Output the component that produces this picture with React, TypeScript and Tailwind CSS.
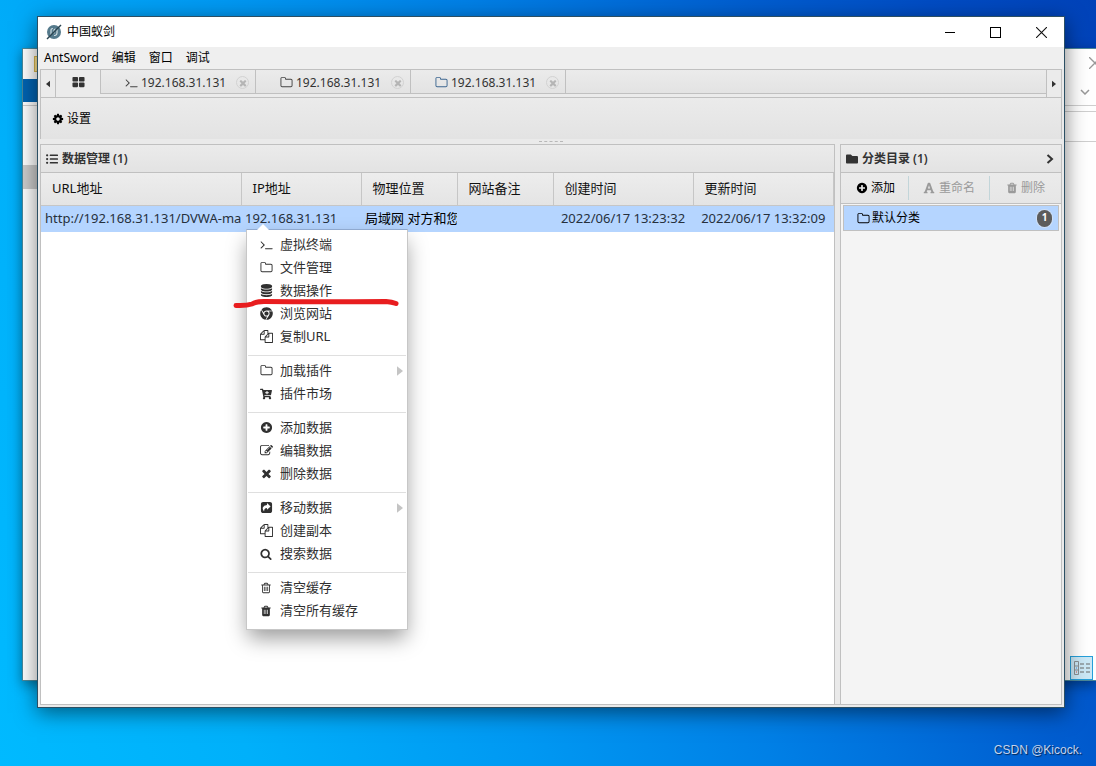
import { FC, ReactNode } from "react";
import clsx from "clsx";
import { FaCartPlus, FaChrome, FaFolder, FaFont, FaListUl } from "react-icons/fa";

const paths = {
  terminal:
    "M649 983l-466 466q-10 10-23 10t-23-10l-50-50q-10-10-10-23t10-23l393-393-393-393q-10-10-10-23t10-23l50-50q10-10 23-10t23 10l466 466q10 10 10 23t-10 23zm1079 457v64q0 14-9 23t-23 9h-960q-14 0-23-9t-9-23v-64q0-14 9-23t23-9h960q14 0 23 9t9 23z",
  folder:
    "M1600 1312v-704q0-40-28-68t-68-28h-704q-40 0-68-28t-28-68v-64q0-40-28-68t-68-28h-320q-40 0-68 28t-28 68v960q0 40 28 68t68 28h1216q40 0 68-28t28-68zm128-704v704q0 92-66 158t-158 66h-1216q-92 0-158-66t-66-158v-960q0-92 66-158t158-66h320q92 0 158 66t66 158v32h672q92 0 158 66t66 158z",
  files:
    "M1696 384q40 0 68 28t28 68v1216q0 40-28 68t-68 28h-960q-40 0-68-28t-28-68v-288h-544q-40 0-68-28t-28-68v-672q0-40 20-88t48-76l408-408q28-28 76-48t88-20h416q40 0 68 28t28 68v328q68-40 128-40h416zm-544 213l-299 299h299v-299zm-640-384l-299 299h299v-299zm196 647l316-316v-416h-384v416q0 40-28 68t-68 28h-416v640h512v-256q0-40 20-88t48-76zm956 804v-1152h-384v416q0 40-28 68t-68 28h-416v640h896z",
  cog: "M1152 896q0-106-75-181t-181-75-181 75-75 181 75 181 181 75 181-75 75-181zm512-109v222q0 12-8 23t-20 13l-185 28q-19 54-39 91 35 50 107 138 10 12 10 25t-9 23q-27 37-99 108t-94 71q-12 0-26-9l-138-108q-44 23-91 38-16 136-29 186-7 28-36 28h-222q-14 0-24.500-8.500t-11.500-21.500l-28-184q-49-16-90-37l-141 107q-10 9-25 9-14 0-25-11-126-114-165-168-7-10-7-23 0-12 8-23 15-21 51-66.500t54-70.500q-27-50-41-99l-183-27q-13-2-21-12.500t-8-23.500v-222q0-12 8-23t19-13l186-28q14-46 39-92-40-57-107-138-10-12-10-24 0-10 9-23 26-36 98.500-107.500t94.500-71.500q13 0 26 10l138 107q44-23 91-38 16-136 29-186 7-28 36-28h222q14 0 24.500 8.500t11.500 21.500l28 184q49 16 90 37l142-107q9-9 24-9 13 0 25 10 129 119 165 170 7 8 7 22 0 12-8 23-15 21-51 66.500t-54 70.500q26 50 41 98l183 28q13 2 21 12.500t8 23.500z",
  plus: "M1344 960v-128q0-26-19-45t-45-19h-256v-256q0-26-19-45t-45-19h-128q-26 0-45 19t-19 45v256h-256q-26 0-45 19t-19 45v128q0 26 19 45t45 19h256v256q0 26 19 45t45 19h128q26 0 45-19t19-45v-256h256q26 0 45-19t19-45zm320-64q0 209-103 385.500t-279.500 279.500-385.500 103-385.500-103-279.500-279.500-103-385.500 103-385.500 279.500-279.500 385.500-103 385.500 103 279.500 279.500 103 385.500z",
  edit: "M888 1184l116-116-152-152-116 116v56h96v96h56zm440-720q-16-16-33 1l-350 350q-17 17-1 33t33-1l350-350q17-17 1-33zm80 594v190q0 119-84.500 203.500t-203.500 84.500h-832q-119 0-203.500-84.500t-84.500-203.500v-832q0-119 84.500-203.500t203.500-84.500h832q63 0 117 25 15 7 18 23 3 17-9 29l-49 49q-14 14-32 8-23-6-45-6h-832q-66 0-113 47t-47 113v832q0 66 47 113t113 47h832q66 0 113-47t47-113v-126q0-13 9-22l64-64q15-15 35-7t20 29zm-96-738l288 288-672 672h-288v-288zm444 132l-92 92-288-288 92-92q28-28 68-28t68 28l152 152q28 28 28 68t-28 68z",
  times:
    "M1490 1322q0 40-28 68l-136 136q-28 28-68 28t-68-28l-294-294-294 294q-28 28-68 28t-68-28l-136-136q-28-28-28-68t28-68l294-294-294-294q-28-28-28-68t28-68l136-136q28-28 68-28t68 28l294 294 294-294q28-28 68-28t68 28l136 136q28 28 28 68t-28 68l-294 294 294 294q28 28 28 68z",
  search:
    "M1216 832q0-185-131.500-316.500t-316.500-131.500-316.500 131.500-131.500 316.500 131.500 316.500 316.500 131.500 316.500-131.500 131.500-316.500zm512 832q0 52-38 90t-90 38q-54 0-90-38l-343-342q-179 124-399 124-143 0-273.500-55.500t-225-150-150-225-55.500-273.500 55.500-273.500 150-225 225-150 273.500-55.500 273.500 55.500 225 150 150 225 55.500 273.500q0 220-124 399l343 343q37 37 37 90z",
  trashOpen:
    "M704 736v576q0 14-9 23t-23 9h-64q-14 0-23-9t-9-23v-576q0-14 9-23t23-9h64q14 0 23 9t9 23zm256 0v576q0 14-9 23t-23 9h-64q-14 0-23-9t-9-23v-576q0-14 9-23t23-9h64q14 0 23 9t9 23zm256 0v576q0 14-9 23t-23 9h-64q-14 0-23-9t-9-23v-576q0-14 9-23t23-9h64q14 0 23 9t9 23zm128 724v-948h-896v948q0 22 7 40.500t14.500 27 10.500 8.500h832q3 0 10.500-8.500t14.500-27 7-40.500zm-672-1076h448l-48-117q-7-9-17-11h-317q-10 2-17 11zm928 32v64q0 14-9 23t-23 9h-96v948q0 83-47 143.500t-113 60.500h-832q-66 0-113-58.500t-47-141.500v-952h-96q-14 0-23-9t-9-23v-64q0-14 9-23t23-9h309l70-167q15-37 54-63t79-26h320q40 0 79 26t54 63l70 167h309q14 0 23 9t9 23z",
  trash:
    "M576 704v640h96v-640zm256 0v640h96v-640zm256 0v640h96v-640zM672 384h448l-48-117q-7-9-17-11h-317q-10 2-17 11zm928 32v64q0 14-9 23t-23 9h-96v948q0 83-47 143.500t-113 60.500h-832q-66 0-113-58.500t-47-141.500v-952h-96q-14 0-23-9t-9-23v-64q0-14 9-23t23-9h309l70-167q15-37 54-63t79-26h320q40 0 79 26t54 63l70 167h309q14 0 23 9t9 23z",
  database:
    "M896 768q237 0 443-43t325-127v170q0 69-103 128t-280 93.500-385 34.500-385-34.500-280-93.500-103-128v-170q119 84 325 127t443 43zm0 768q237 0 443-43t325-127v170q0 69-103 128t-280 93.500-385 34.500-385-34.500-280-93.500-103-128v-170q119 84 325 127t443 43zm0-384q237 0 443-43t325-127v170q0 69-103 128t-280 93.500-385 34.500-385-34.500-280-93.500-103-128v-170q119 84 325 127t443 43zm0-1152q208 0 385 34.500t280 93.500 103 128v128q0 69-103 128t-280 93.500-385 34.500-385-34.500-280-93.500-103-128v-128q0-69 103-128t280-93.500 385-34.500z",
  share:
    "M1664 416v960q0 119-84.500 203.500t-203.500 84.500h-960q-119 0-203.500-84.500t-84.500-203.500v-960q0-119 84.500-203.500t203.500-84.500h960q119 0 203.500 84.500t84.500 203.500zM960 290v250Q500 560 390 880Q320 1180 560 1440Q540 960 960 950V1210L1460 750z",
  large:
    "M832 1024v384q0 52-38 90t-90 38h-512q-52 0-90-38t-38-90v-384q0-52 38-90t90-38h512q52 0 90 38t38 90zm0-768v384q0 52-38 90t-90 38h-512q-52 0-90-38t-38-90v-384q0-52 38-90t90-38h512q52 0 90 38t38 90zm896 768v384q0 52-38 90t-90 38h-512q-52 0-90-38t-38-90v-384q0-52 38-90t90-38h512q52 0 90 38t38 90zm0-768v384q0 52-38 90t-90 38h-512q-52 0-90-38t-38-90v-384q0-52 38-90t90-38h512q52 0 90 38t38 90z",
};

type IconName = keyof typeof paths;

const Icon: FC<{ name: IconName; className?: string }> = ({ name, className }) => (
  <svg viewBox="0 0 1792 1792" fill="currentColor" fillRule="evenodd" className={clsx("shrink-0", className || "size-[13px]")}>
    <path d={paths[name]} />
  </svg>
);

const Arrow: FC<{ left?: boolean; className?: string }> = ({ left, className }) => (
  <svg viewBox="0 0 5 8" fill="currentColor" className={className}>
    <path d={left ? "M5 0v8L0 4z" : "M0 0v8l5-4z"} />
  </svg>
);

type MenuEntry = { icon: ReactNode; label: string; sub?: boolean };

const menuGroups: MenuEntry[][] = [
  [
    { icon: <Icon name="terminal" />, label: "虚拟终端" },
    { icon: <Icon name="folder" />, label: "文件管理" },
    { icon: <Icon name="database" />, label: "数据操作" },
    { icon: <FaChrome className="size-[13px]" />, label: "浏览网站" },
    { icon: <Icon name="files" />, label: "复制URL" },
  ],
  [
    { icon: <Icon name="folder" />, label: "加载插件", sub: true },
    { icon: <FaCartPlus className="size-3" />, label: "插件市场" },
  ],
  [
    { icon: <Icon name="plus" />, label: "添加数据" },
    { icon: <Icon name="edit" />, label: "编辑数据" },
    { icon: <Icon name="times" />, label: "删除数据" },
  ],
  [
    { icon: <Icon name="share" />, label: "移动数据", sub: true },
    { icon: <Icon name="files" />, label: "创建副本" },
    { icon: <Icon name="search" className="size-3" />, label: "搜索数据" },
  ],
  [
    { icon: <Icon name="trashOpen" className="size-3" />, label: "清空缓存" },
    { icon: <Icon name="trash" className="size-3" />, label: "清空所有缓存" },
  ],
];

const tabs: { icon: IconName; color: string }[] = [
  { icon: "terminal", color: "text-[#444444]" },
  { icon: "folder", color: "text-[#444444]" },
  { icon: "folder", color: "text-[#3c6690]" },
];

const columns = ["URL地址", "IP地址", "物理位置", "网站备注", "创建时间", "更新时间"];

const ContextMenu: FC = () => (
  <div role="menu" className="absolute left-[205px] top-[84px] z-10 w-[162px] border border-[#c7c7c7] border-t-[#8fa9cf] bg-white pt-[3px] pb-[7px] shadow-[0_10px_20px_-2px_rgba(0,0,0,0.4)]">
    <svg viewBox="0 0 12 6" className="absolute left-2.5 -top-1.5 h-1.5 w-3">
      <path d="M0 6l6-6 6 6z" fill="#fff" />
    </svg>
    {menuGroups.map((group, i) => (
      <div key={i}>
        {i > 0 && <hr className="mx-px mt-[7px] mb-[3px] border-[#dfdfdf]" />}
        {group.map((item) => (
          <button key={item.label} role="menuitem" className="flex h-[23px] w-full items-center pl-3 pr-1 text-left text-[13px] text-[#303030]">
            <span className="flex w-[21px] justify-start">
              <span className="flex w-3.5 justify-center">{item.icon}</span>
            </span>
            <span className="flex-1">{item.label}</span>
            {item.sub && <Arrow className="h-2.5 w-1.5 text-[#c4c4c4]" />}
          </button>
        ))}
      </div>
    ))}
    {/* marker stroke under the database entry */}
    <svg viewBox="0 0 170 12" className="pointer-events-none absolute -left-4 top-[67px] h-3 w-[170px]">
      <path d="M5 8.500Q15 9 21 7Q25 4.500 33 4.500Q90 5 155 4.500Q161 5 165 6.500" fill="none" stroke="#e81d1f" strokeWidth="5" strokeLinecap="round" />
    </svg>
  </div>
);

const DataPanel: FC = () => (
  <section className="relative flex min-w-0 flex-1 flex-col border border-b-0 border-[#c0c0c0] bg-white">
    <h2 className="flex h-7 shrink-0 items-center gap-1 border-b border-[#c0c0c0] bg-linear-to-b from-[#ebebeb] to-[#e3e3e3] pl-[5px] text-xs font-semibold text-[#333333]">
      <FaListUl className="size-3" />
      数据管理 (1)
    </h2>
    <table className="w-full table-fixed border-collapse text-[13px]">
      <colgroup>
        <col className="w-[200px]" />
        <col className="w-[120px]" />
        <col className="w-24" />
        <col className="w-24" />
        <col className="w-[140px]" />
        <col />
      </colgroup>
      <thead>
        <tr className="h-8 bg-linear-to-b from-[#ededed] to-[#e4e4e4]">
          {columns.map((c) => (
            <th key={c} className="border-r border-b border-[#c6c6c6] pl-[11px] text-left font-normal text-[#111111]">
              {c}
            </th>
          ))}
        </tr>
      </thead>
      <tbody>
        <tr className="h-[27px] whitespace-nowrap bg-[#b5d5ff] text-[#26303c]">
          <td className="overflow-hidden pl-1">http://192.168.31.131/DVWA-mas</td>
          <td className="overflow-hidden pl-1">192.168.31.131</td>
          <td className="overflow-hidden pl-1 text-black">局域网 对方和您</td>
          <td />
          <td className="text-center">2022/06/17 13:23:32</td>
          <td className="text-center">2022/06/17 13:32:09</td>
        </tr>
      </tbody>
    </table>
    <ContextMenu />
  </section>
);

const CategoryPanel: FC = () => (
  <aside className="flex w-[222px] shrink-0 flex-col border border-b-0 border-[#c0c0c0] bg-[#f4f4f4] text-xs">
    <h2 className="flex h-7 shrink-0 items-center gap-1 border-b border-[#c0c0c0] bg-linear-to-b from-[#ebebeb] to-[#e3e3e3] pl-[5px] pr-[7px] font-semibold text-[#333333]">
      <FaFolder className="size-3" />
      <span className="flex-1">分类目录 (1)</span>
      <svg viewBox="0 0 8 10" className="h-2.5 w-2" fill="none" stroke="currentColor" strokeWidth="2">
        <path d="M1.500 1L6 5 1.500 9" />
      </svg>
    </h2>
    <div className="flex h-[31px] shrink-0 items-center border-b border-[#c0c0c0] bg-linear-to-b from-[#ebebeb] to-[#e6e6e6]">
      <button className="flex h-6 w-[68px] items-center gap-[3px] border-r border-[#c2d5d9] pl-[15px] text-black">
        <Icon name="plus" className="size-3" />
        添加
      </button>
      <button disabled className="flex h-6 w-[81px] items-center justify-center gap-1 border-r border-[#c2d5d9] text-[#9a9a9a]">
        <FaFont className="size-3" />
        重命名
      </button>
      <button disabled className="flex h-6 flex-1 items-center justify-center gap-[3px] text-[#9a9a9a]">
        <Icon name="trash" className="size-3" />
        删除
      </button>
    </div>
    <button className="mx-0.5 mt-px flex h-[26px] items-center border border-[#c0c0c0] bg-[#b5d5ff] pl-[13px] pr-1.5 text-left text-black">
      <Icon name="folder" />
      <span className="flex-1 pl-0.5">默认分类</span>
      <span className="flex h-[17px] w-[15px] items-center justify-center rounded-full bg-[#5c5c5c] text-[10px] font-bold text-white ring-1 ring-[#cfe0f7]">
        1
      </span>
    </button>
  </aside>
);

const MainWindow: FC = () => (
  <main className="absolute left-[37px] top-4 right-[31px] bottom-[58px] flex flex-col border border-[#2c4f63] bg-[#eaeaea] shadow-[0_5px_20px_rgba(0,0,0,0.5)]">
    <header className="flex h-[30px] shrink-0 items-center bg-white pl-2">
      <svg viewBox="0 0 16 16" className="size-4">
        <circle cx="8" cy="8" r="7" fill="#557a8c" />
        <path d="M5 11V6.500q0-2 2-2M8 9.500v-3q0-1.500 1.500-1.500M11 5v4q0 2-2 2.500H8" fill="none" stroke="#cfdce1" strokeWidth="1.200" />
        <path d="M1 15L15 1" stroke="#2b4451" strokeWidth="1.500" />
      </svg>
      <h1 className="flex-1 pl-[5px] text-xs text-black">中国蚁剑</h1>
      <button aria-label="Minimize" className="flex h-full w-[46px] items-center justify-center">
        <span className="h-px w-2.5 bg-black" />
      </button>
      <button aria-label="Maximize" className="flex h-full w-[45px] items-center justify-center">
        <span className="size-[11px] border border-black" />
      </button>
      <button aria-label="Close" className="flex h-full w-[46px] items-center justify-center">
        <svg viewBox="0 0 11 11" className="size-[11px]" stroke="#111" strokeWidth="1.100">
          <path d="M0 0l11 11M11 0L0 11" />
        </svg>
      </button>
    </header>
    <nav className="flex h-[22px] shrink-0 items-center gap-[13px] bg-[#efefef] pl-1.5 text-xs text-black">
      <button>AntSword</button>
      <button>编辑</button>
      <button>窗口</button>
      <button>调试</button>
    </nav>

    <div className="mx-0.5 mb-0.5 flex min-h-0 flex-1 flex-col border-b border-[#c0c0c0]">
      <div className="flex h-[29px] shrink-0 border border-[#c0c0c0] bg-[#ebebeb] text-xs text-[#333333]">
        <button aria-label="Scroll left" className="flex w-[15px] items-center justify-center border-r border-[#c0c0c0]">
          <Arrow left className="h-2 w-1" />
        </button>
        <div className="flex h-6 flex-1 border-b border-[#c0c0c0] bg-linear-to-b from-[#ebebeb] to-[#e3e3e3]">
          <button aria-label="Home" className="flex h-6 w-[45px] items-center justify-center border-r border-[#c0c0c0] bg-[#ebebeb]">
            <Icon name="large" />
          </button>
          {tabs.map((tab, i) => (
            <div key={i} className="flex w-[155px] items-center border-r border-[#c0c0c0] pt-0.5 pl-6 pr-1.5">
              <button className="flex flex-1 items-center gap-[3px]">
                <Icon name={tab.icon} className={clsx("size-[13px]", tab.color)} />
                192.168.31.131
              </button>
              <button aria-label="Close tab" className="flex size-[13px] items-center justify-center rounded-full border border-[#d2d2d2] text-[#b5b5b5]">
                <Icon name="times" className="size-2.5" />
              </button>
            </div>
          ))}
        </div>
        <button aria-label="Scroll right" className="flex w-[15px] items-center justify-center border-l border-[#c0c0c0]">
          <Arrow className="h-2 w-1" />
        </button>
      </div>

      <div className="flex h-[41px] shrink-0 items-center border-x border-[#c0c0c0] bg-linear-to-b from-[#ebebeb] to-[#e3e3e3] pl-[11px]">
        <button className="flex items-center gap-[3px] text-xs text-black">
          <Icon name="cog" className="size-3" />
          设置
        </button>
      </div>
      <div className="flex h-[5px] shrink-0 items-center justify-center">
        <span className="w-6 border-t border-dashed border-[#b8b8b8]" />
      </div>

      <div className="flex min-h-0 flex-1 gap-[5px]">
        <DataPanel />
        <CategoryPanel />
      </div>
    </div>
  </main>
);

// explorer window that sits behind, only its edges are visible
const BackWindow: FC = () => (
  <div className="absolute left-[22px] right-0 top-12 bottom-[85px] flex justify-between border border-r-0 border-[#4b8798] bg-white shadow-[0_4px_12px_rgba(0,0,0,0.4)]">
    <div className="w-4">
      <div className="flex h-[30px] items-center justify-end">
        <span className="h-4 w-[5px] border border-[#d9b64f] bg-[#ffe48f]" />
      </div>
      <div className="h-[23px] bg-[#0063b1]" />
      <div className="mt-[3px] h-[60px] border-t border-[#cfcfcf]" />
      <div className="h-6 bg-[#cccccc]" />
    </div>
    <div className="flex w-8 flex-col">
      <div className="flex h-[57px] shrink-0 flex-col items-end justify-between border-b border-[#cfcfcf] pt-2 pb-2.5">
        <svg viewBox="0 0 7 12" className="h-3 w-[7px]" fill="none" stroke="#999" strokeWidth="1.300">
          <path d="M0 0l12 12M12 0L0 12" />
        </svg>
        <svg viewBox="0 0 10 6" className="mr-1.5 h-1.5 w-2.5" fill="none" stroke="#999" strokeWidth="1.500">
          <path d="M1 1l4 4 4-4" />
        </svg>
      </div>
      <div className="mt-[5px] h-[31px] shrink-0 border-y border-[#cfcfcf]" />
      <div className="flex flex-1 items-end justify-end pr-[3px]">
        <button aria-label="Details view" className="flex h-6 w-[23px] items-center justify-center border border-[#26a0da] bg-[#cbe8f6]">
          <svg viewBox="0 0 18 14" className="h-3.5 w-[18px]" fill="none">
            <path d="M1.500 .5h4v13h-4zM1.500 5h4M1.500 9h4" stroke="#8a8f93" />
            <path d="M7 3h4M13 3h4M7 7h4M13 7h4M7 11h4M13 11h4" stroke="#6a6a6a" />
            <path d="M3 7h1" stroke="#3e8de0" />
            <path d="M3 11h1" stroke="#e04a3e" />
          </svg>
        </button>
      </div>
    </div>
  </div>
);

const App: FC = () => {
  return (
    <div className="relative h-screen overflow-hidden bg-[linear-gradient(68deg,#00baff_0%,#00b0fa_18%,#0098f2_38%,#0080e6_55%,#005ed0_75%,#004cc4_88%,#0042b8_100%)] [font-family:'Noto_Sans','Noto_Sans_CJK_SC',sans-serif]">
      <BackWindow />
      <MainWindow />
      <footer className="absolute bottom-2 right-3.5 text-xs text-[#c3d3ee] [font-family:'Liberation_Sans',sans-serif] [text-shadow:1px_1px_1px_rgba(0,0,0,0.6)]">
        CSDN @Kicock.
      </footer>
    </div>
  );
};

export default App;
